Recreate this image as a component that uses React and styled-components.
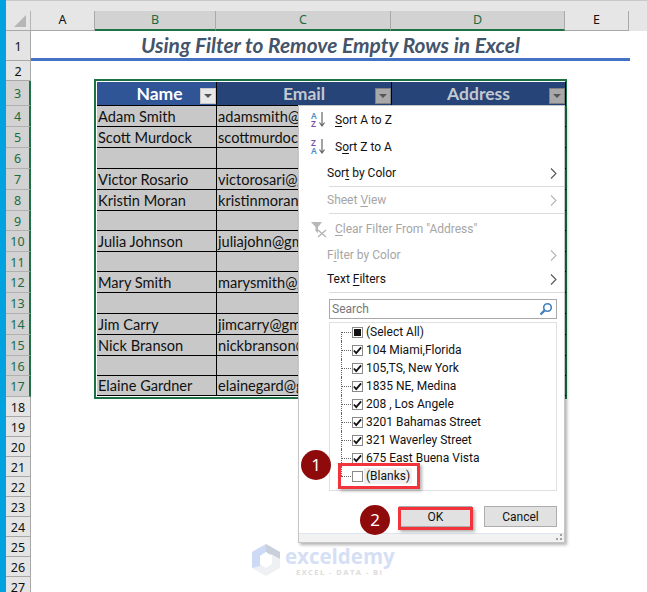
import React from "react";
import styled, { createGlobalStyle } from "styled-components";

const Global = createGlobalStyle`
  html, body { margin: 0; padding: 0; background: #fff; overflow: hidden; }
  #root { width: 647px; height: 592px; }
`;

const Page = styled.div`
  position: relative; width: 647px; height: 592px; overflow: hidden; display: flex;
  background: #fff; font-family: "Lato", "Liberation Sans", sans-serif; color: #111;
`;
const Strip = styled.div`width: 6px; background: #00a2e0; flex: none;`;
const Main = styled.div`flex: 1; display: flex; flex-direction: column; min-width: 0; min-height: 0;`;
const TopGap = styled.div`height: 11px; flex: none; background: #e6e6e6; border-top: 1px solid #c9c9c9; box-sizing: border-box;`;
const ColBar = styled.div`display: flex; height: 20px; background: #e6e6e6; box-sizing: border-box; flex: none;`;
const Corner = styled.div`
  width: 25px; box-sizing: border-box; border-right: 1px solid #b5b5b5; border-bottom: 1px solid #a8a8a8;
  display: flex; align-items: flex-end; justify-content: flex-end; padding: 0 4px 3px 0;
`;
const Triangle = styled.div`width: 0; height: 0; border-style: solid; border-width: 0 0 12px 12px; border-color: transparent transparent #b6b6b6 transparent;`;
const ColHead = styled.div`
  width: ${p => p.$w}px; box-sizing: border-box; text-align: center;
  font: 12.5px/18px "Noto Sans", sans-serif;
  background: ${p => p.$on ? "#d2d2d2" : "#e6e6e6"};
  color: ${p => p.$on ? "#1d6b42" : "#111"};
  border-right: 1px solid #a9a9a9;
  border-bottom: ${p => p.$on ? "2px solid #1e7145" : "1px solid #a8a8a8"};
`;
const Body = styled.div`display: flex; flex: 1; min-height: 0;`;
const RowHeads = styled.div`width: 25px; flex: none; display: flex; flex-direction: column;`;
const RowHead = styled.div`
  height: ${p => p.$h}px; flex: none; box-sizing: border-box; text-align: center;
  font: 12.5px/${p => p.$h + 1}px "Noto Sans", sans-serif;
  background: ${p => p.$on ? "#d2d2d2" : "#e4e4e4"};
  color: ${p => p.$on ? "#1d6b42" : "#111"};
  border-bottom: 1px solid ${p => p.$on ? "#b0b0b0" : "#a8a8a8"};
  border-right: ${p => p.$on ? "2px solid #1e7145" : "1px solid #a8a8a8"};
`;
const Sheet = styled.div`flex: 1; display: flex; flex-direction: column; min-width: 0;`;
const TitleRow = styled.div`
  width: 599px; height: 30px; flex: none; box-sizing: border-box; text-align: center; color: #44546a;
  font: italic 700 20.9px/28px "Lato", sans-serif; border-bottom: 3px solid #4472c4;
`;
const Spacer = styled.div`height: 18px; flex: none;`;
const TableFrame = styled.div`
  margin-left: 63px; width: 473px; flex: none; box-sizing: border-box; border: 2px solid #1e7145; background: #fff;
  padding: 1px;
`;
const Grid = styled.div`display: grid; grid-template-columns: 120px 175px 174px; background: #c8c8c8;`;
const HeadCell = styled.div`
  position: relative; height: 24px; box-sizing: border-box; text-align: center; padding-left: ${p => p.$dim ? 0 : 6}px;
  background: ${p => p.$dim ? "#264478" : "#2f5597"}; color: ${p => p.$dim ? "#c4c8d0" : "#fff"};
  font: 700 17.5px/24px "Lato", sans-serif;
  border-right: 1px solid #000; border-bottom: 1px solid #000;
`;
const FilterBtn = styled.div`
  position: absolute; right: 0; top: 6px; width: 16px; height: 16px; box-sizing: border-box;
  background: ${p => p.$dim ? "#a8a8a8" : "#e8e8e8"}; border: 1px solid ${p => p.$dim ? "#808080" : "#c8c8c8"};
  &::after {
    content: ""; position: absolute; left: 3px; top: 5px; width: 0; height: 0;
    border-style: solid; border-width: 4px 4px 0 4px; border-color: #555 transparent transparent transparent;
  }
`;
const Cell = styled.div`
  height: ${p => p.$h}px; box-sizing: border-box; padding-left: 1px; overflow: hidden; white-space: nowrap;
  font: 400 14.6px/${p => p.$h}px "Lato", sans-serif; color: #111;
  border-right: 1px solid #000; border-bottom: 1px solid #000;
  &:nth-child(3n) { border-right: 0; }
`;

const Popup = styled.div`
  position: absolute; left: 298px; top: 105px; width: 267px; height: 438px; box-sizing: border-box;
  background: #fff; border: 1px solid #c6c6c6; box-shadow: 2px 2px 3px rgba(0,0,0,.3);
  display: flex; flex-direction: column;
  font: 12px/16px "Roboto", sans-serif; color: #111;
`;
const MenuRow = styled.div`
  display: flex; align-items: center; flex: none; height: ${p => p.$h || 26}px;
  padding-left: ${p => p.$pad}px; padding-right: 7px; color: ${p => p.$off ? "#a6a6a6" : "#111"};
`;
const IconSlot = styled.span`width: 24px; flex: none; display: flex; justify-content: flex-start;`;
const Label = styled.span`flex: 1;`;
const Mn = styled.span`text-decoration: underline; text-underline-offset: 2px;`;
const Sep = styled.div`height: 1px; flex: none; margin-left: 30px; background: #dcdcdc;`;
const SearchBox = styled.div`
  margin: 6px 7px 0 30px; height: 20px; flex: none; box-sizing: border-box; border: 1px solid #a9a9a9;
  display: flex; align-items: center; justify-content: space-between; padding: 0 3px 0 2px; color: #777;
`;
const ListBox = styled.div`
  margin: 3px 7px 0 30px; height: 169px; flex: none; box-sizing: border-box; border: 1px solid #e0e0e0;
  display: flex; flex-direction: column;
`;
const TreeRow = styled.div`
  position: relative; height: 18px; flex: none; display: flex; align-items: center; padding-left: 22px; gap: 3px;
  &::before { content: ""; position: absolute; left: 11px; top: 9px; width: 10px; border-top: 1px dotted #666; }
  &::after { content: ""; position: absolute; left: 11px; top: ${p => p.$first ? 9 : 0}px; height: ${p => p.$first ? 9 : p.$last ? 9 : 18}px; border-left: 1px dotted #666; }
`;
const Box = styled.span`
  width: 11px; height: 11px; flex: none; box-sizing: border-box; border: 1px solid #8a8a8a; background: #fff;
  display: flex; align-items: center; justify-content: center;
`;
const Mixed = styled.span`width: 7px; height: 7px; background: #111;`;
const TreeText = styled.span`
  white-space: nowrap; padding: 0 2px; margin-left: -2px;
  background: ${p => p.$hl ? "#f0f0f0" : "transparent"};
`;
const Buttons = styled.div`display: flex; justify-content: flex-end; gap: 12px; margin: 15px 7px 0 0; flex: none;`;
const Btn = styled.div`
  width: 73px; height: 21px; box-sizing: border-box; border: 1px solid #adadad; background: #e1e1e1;
  text-align: center; line-height: 21px;
`;
const Grip = styled.div`
  margin-top: 6px; flex: 1; border-top: 1px solid #dbe6f1; background: #f2f2f2; position: relative;
  &::after {
    content: ""; position: absolute; right: 2px; bottom: 2px; width: 2px; height: 2px; background: #a0a0a0;
    box-shadow: -4px 0 #a0a0a0, 0 -4px #a0a0a0;
  }
`;
const Highlight = styled.div`
  position: absolute; left: ${p => p.$x}px; top: ${p => p.$y}px; width: ${p => p.$w}px; height: ${p => p.$h}px;
  box-sizing: border-box; border: 3px solid #f2333b; box-shadow: 2px 2px 3px rgba(0,0,0,.3);
`;
const Badge = styled.div`
  position: absolute; left: ${p => p.$x}px; top: ${p => p.$y}px; width: 30px; height: 30px; border-radius: 50%;
  background: #8f0a0a; color: #fff; text-align: center; font: 17px/30px "Noto Sans", sans-serif;
`;
const Logo = styled.div`position: absolute; left: 252px; top: 544px; display: flex; gap: 5px;`;
const LogoText = styled.div`display: flex; flex-direction: column;`;
const LogoName = styled.span`font: 700 20.5px/24px "Open Sans", sans-serif; color: #d5e0f6;`;
const LogoSub = styled.span`font: 700 7.5px/9px "Open Sans", sans-serif; color: #dcdcdc; letter-spacing: 1.45px; margin-left: 11px;`;

const rowH = [30, 20, 25, 21, 21, 21, 21, 21, 20, 21, 20, 21, 21, 21, 21, 20, 21, 20, 20, 20, 20, 20, 20, 20, 20, 20, 20];
const rows = [
  ["Adam Smith", "adamsmith@gmail.com", 21], ["Scott Murdock", "scottmurdock@gmail.com", 21], ["", "", 21],
  ["Victor Rosario", "victorosari@gmail.com", 21], ["Kristin Moran", "kristinmoran@gmail.com", 21], ["", "", 20],
  ["Julia Johnson", "juliajohn@gmail.com", 21], ["", "", 20], ["Mary Smith", "marysmith@gmail.com", 21], ["", "", 21],
  ["Jim Carry", "jimcarry@gmail.com", 21], ["Nick Branson", "nickbranson@gmail.com", 21], ["", "", 20], ["Elaine Gardner", "elainegard@gmail.com", 20],
];
const items = ["104 Miami,Florida", "105,TS, New York", "1835  NE, Medina", "208 , Los Angele", "3201 Bahamas Street", "321 Waverley Street", "675 East Buena Vista"];

const Check = () => (
  <svg width="10" height="9" viewBox="0 0 10 9"><path d="M1 4.5 L3.6 7.5 L9 1" fill="none" stroke="#111" strokeWidth="2" /></svg>
);
const Chevron = ({ off }) => (
  <svg width="7" height="11" viewBox="0 0 7 11"><path d="M1 .5 L6 5.5 L1 10.5" fill="none" stroke={off ? "#b5b5b5" : "#555"} strokeWidth="1.1" /></svg>
);
const SortIcon = ({ top, bottom, topC, bottomC }) => (
  <svg width="16" height="18" viewBox="0 0 16 18" style={{ overflow: "visible" }}>
    <text x="0" y="8" fontSize="8.5" fontFamily="Noto Sans" fontWeight="600" fill={topC}>{top}</text>
    <text x="0" y="16" fontSize="8.5" fontFamily="Noto Sans" fontWeight="600" fill={bottomC}>{bottom}</text>
    <path d="M11 1 V14 M8.5 11.5 L11 15 L13.5 11.5" fill="none" stroke="#666" strokeWidth="1.2" />
  </svg>
);
const ClearIcon = () => (
  <svg width="17" height="17" viewBox="0 0 17 17">
    <path d="M0 1 H11 L7 6 V12 L4.5 10 V6 Z" fill="#b8b8b8" />
    <path d="M7 9 L15 16 M15 9 L7 16" stroke="#b0b0b0" strokeWidth="1.2" />
  </svg>
);
const Lens = () => (
  <svg width="14" height="14" viewBox="0 0 14 14">
    <circle cx="8.5" cy="5.5" r="3.8" fill="none" stroke="#3f7fbf" strokeWidth="1.6" />
    <path d="M5.6 8.4 L1.5 12.5" stroke="#3f7fbf" strokeWidth="2.2" />
  </svg>
);
const Hex = () => (
  <svg width="28" height="32" viewBox="0 0 28 32">
    <path d="M14 0 L28 8 V24 L14 32 L0 24 V8 Z" fill="#eef0f4" />
    <path d="M14 0 L28 8 V15 L19 10 L14 14 Z" fill="#c9cfdb" />
    <path d="M0 8 L14 0 V8 L8 12 V22 L0 24 Z" fill="#ccdaf6" />
    <path d="M8 12 L14 8 L20 12 V20 L14 24 L8 20 Z" fill="#fff" />
  </svg>
);

export default function App() {
  return (
    <Page>
      <Global />
      <Strip />
      <Main>
        <TopGap />
        <ColBar>
          <Corner><Triangle /></Corner>
          <ColHead $w={64}>A</ColHead>
          <ColHead $w={121} $on>B</ColHead>
          <ColHead $w={175} $on>C</ColHead>
          <ColHead $w={174} $on>D</ColHead>
          <ColHead $w={64}>E</ColHead>
        </ColBar>
        <Body>
          <RowHeads>
            {rowH.map((h, i) => <RowHead key={i} $h={h} $on={i >= 2 && i <= 16}>{i + 1}</RowHead>)}
          </RowHeads>
          <Sheet>
            <TitleRow>Using Filter to Remove Empty Rows in Excel</TitleRow>
            <Spacer />
            <TableFrame>
              <Grid>
                <HeadCell>Name<FilterBtn /></HeadCell>
                <HeadCell $dim>Email<FilterBtn $dim /></HeadCell>
                <HeadCell $dim>Address<FilterBtn $dim /></HeadCell>
                {rows.map((r, i) => (
                  <React.Fragment key={i}>
                    <Cell $h={r[2]}>{r[0]}</Cell>
                    <Cell $h={r[2]}>{r[1]}</Cell>
                    <Cell $h={r[2]} />
                  </React.Fragment>
                ))}
              </Grid>
            </TableFrame>
          </Sheet>
        </Body>
      </Main>

      <Logo>
        <Hex />
        <LogoText>
          <LogoName>exceldemy</LogoName>
          <LogoSub>EXCEL - DATA - BI</LogoSub>
        </LogoText>
      </Logo>

      <Popup>
        <MenuRow $pad={12} $h={27}><IconSlot><SortIcon top="A" bottom="Z" topC="#4a8bc9" bottomC="#7b4fa6" /></IconSlot><Label><Mn>S</Mn>ort A to Z</Label></MenuRow>
        <MenuRow $pad={12} $h={27}><IconSlot><SortIcon top="Z" bottom="A" topC="#7b4fa6" bottomC="#4a8bc9" /></IconSlot><Label>S<Mn>o</Mn>rt Z to A</Label></MenuRow>
        <MenuRow $pad={28} $h={26}><Label>Sor<Mn>t</Mn> by Color</Label><Chevron /></MenuRow>
        <Sep />
        <MenuRow $pad={28} $h={26} $off><Label>Sheet <Mn>V</Mn>iew</Label><Chevron off /></MenuRow>
        <Sep />
        <MenuRow $pad={12} $h={30} $off><IconSlot><ClearIcon /></IconSlot><Label><Mn>C</Mn>lear Filter From "Address"</Label></MenuRow>
        <MenuRow $pad={28} $h={22} $off><Label>F<Mn>i</Mn>lter by Color</Label><Chevron off /></MenuRow>
        <MenuRow $pad={28} $h={26}><Label>Text <Mn>F</Mn>ilters</Label><Chevron /></MenuRow>
        <Sep />
        <SearchBox>Search<Lens /></SearchBox>
        <ListBox>
          <TreeRow $first><Box><Mixed /></Box><TreeText>(Select All)</TreeText></TreeRow>
          {items.map(t => <TreeRow key={t}><Box><Check /></Box><TreeText>{t}</TreeText></TreeRow>)}
          <TreeRow $last><Box /><TreeText $hl>(Blanks)</TreeText></TreeRow>
        </ListBox>
        <Buttons><Btn>OK</Btn><Btn>Cancel</Btn></Buttons>
        <Grip />
      </Popup>

      <Highlight $x={338} $y={463} $w={82} $h={26} />
      <Highlight $x={398} $y={507} $w={75} $h={23} />
      <Badge $x={301} $y={450}>1</Badge>
      <Badge $x={360} $y={505}>2</Badge>
    </Page>
  );
}
